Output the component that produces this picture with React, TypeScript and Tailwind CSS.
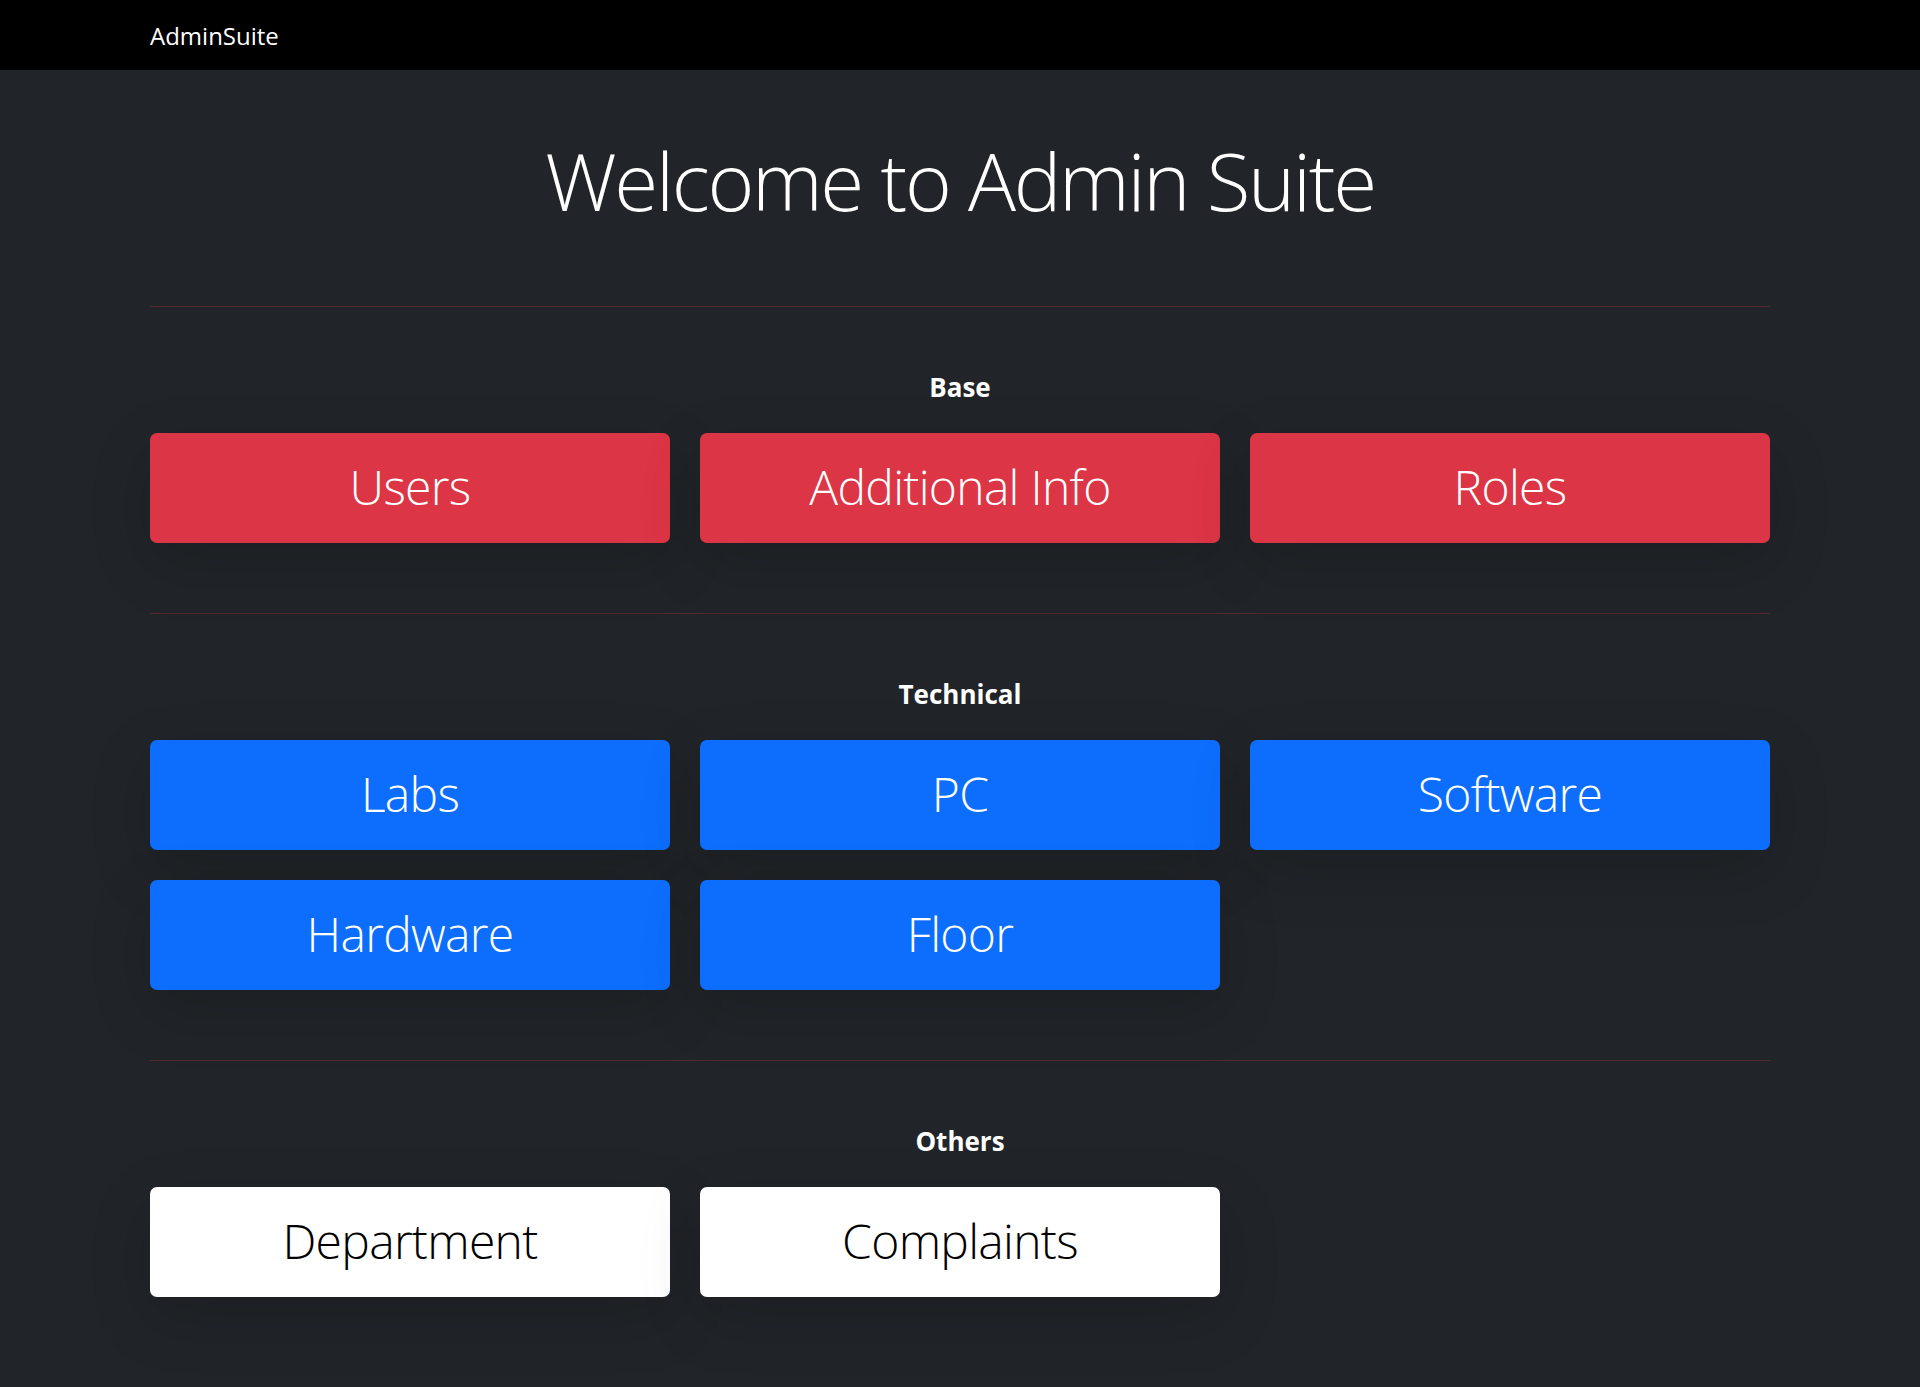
import React from "react";

type Btn = { label: string; kind: "red" | "blue" | "white" };

const sections: { title: string; items: Btn[] }[] = [
  {
    title: "Base",
    items: [
      { label: "Users", kind: "red" },
      { label: "Additional Info", kind: "red" },
      { label: "Roles", kind: "red" },
    ],
  },
  {
    title: "Technical",
    items: [
      { label: "Labs", kind: "blue" },
      { label: "PC", kind: "blue" },
      { label: "Software", kind: "blue" },
      { label: "Hardware", kind: "blue" },
      { label: "Floor", kind: "blue" },
    ],
  },
  {
    title: "Others",
    items: [
      { label: "Department", kind: "white" },
      { label: "Complaints", kind: "white" },
    ],
  },
];

function Tile({ b }: { b: Btn }) {
  const color =
    b.kind === "red"
      ? "bg-[#dc3545] text-white"
      : b.kind === "blue"
      ? "bg-[#0d6efd] text-white"
      : "bg-white text-black";
  return (
    <a
      href="#"
      className={`${color} flex h-[110px] items-center justify-center rounded-[7px] pb-[3px] text-[48px] font-light tracking-[-0.7px] shadow-[0_20px_60px_rgba(0,0,0,0.175)]`}
    >
      {b.label}
    </a>
  );
}

export default function App() {
  return (
    <div className="min-h-[1387px] bg-[#212529] font-['Open_Sans','Noto_Sans',sans-serif] text-white">
      <nav className="h-[70px] bg-black">
        <div className="mx-auto flex h-full w-[1620px] items-center pt-[2px]">
          <span className="text-[24px] leading-none">AdminSuite</span>
        </div>
      </nav>
      <main className="mx-auto w-[1620px] pb-[90px]">
        <h1 className="mt-[62px] text-center text-[80px] font-light leading-[1.2] tracking-[-2.3px]">
          Welcome to Admin Suite
        </h1>
        {sections.map((s, i) => (
          <section key={s.title} className={i === 0 ? "mt-[78px]" : "mt-[70px]"}>
            <hr className="border-0 border-t border-[#50292f]" />
            <div className="mt-[65px] h-[30px] text-center text-[26px] font-bold leading-[30px]">
              {s.title}
            </div>
            <div className="mt-[31px] grid grid-cols-3 gap-[30px]">
              {s.items.map((b) => (
                <Tile key={b.label} b={b} />
              ))}
            </div>
          </section>
        ))}
      </main>
    </div>
  );
}
